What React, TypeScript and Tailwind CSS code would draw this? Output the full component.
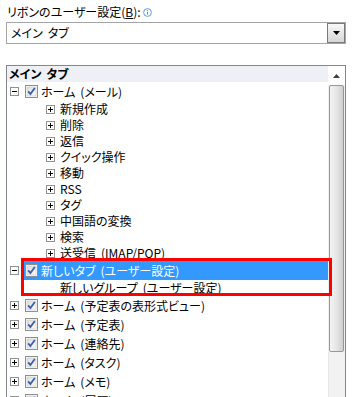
type Row =
  | { kind: "top"; label: string; open: boolean; selected?: boolean }
  | { kind: "sub"; label: string }
  | { kind: "group"; label: string };

const rows: Row[] = [
  { kind: "top", label: "ホーム (メール)", open: true },
  { kind: "sub", label: "新規作成" },
  { kind: "sub", label: "削除" },
  { kind: "sub", label: "返信" },
  { kind: "sub", label: "クイック操作" },
  { kind: "sub", label: "移動" },
  { kind: "sub", label: "RSS" },
  { kind: "sub", label: "タグ" },
  { kind: "sub", label: "中国語の変換" },
  { kind: "sub", label: "検索" },
  { kind: "sub", label: "送受信 (IMAP/POP)" },
  { kind: "top", label: "新しいタブ (ユーザー設定)", open: true, selected: true },
  { kind: "group", label: "新しいグループ (ユーザー設定)" },
  { kind: "top", label: "ホーム (予定表の表形式ビュー)", open: false },
  { kind: "top", label: "ホーム (予定表)", open: false },
  { kind: "top", label: "ホーム (連絡先)", open: false },
  { kind: "top", label: "ホーム (タスク)", open: false },
  { kind: "top", label: "ホーム (メモ)", open: false },
  { kind: "top", label: "ホーム (履歴)", open: false },
];

// spaces in the source font are wider than Noto's, so pad them a bit
function Label({ text }: { text: string }) {
  const parts = text.split(" ");
  return (
    <span className="whitespace-nowrap">
      {parts.map((p, i) => (
        <span key={i}>
          {i > 0 && <span className="inline-block w-[5px]" />}
          {p}
        </span>
      ))}
    </span>
  );
}

function Expander({ open }: { open: boolean }) {
  return (
    <svg width="9" height="9" viewBox="0 0 9 9" className="shrink-0">
      <rect x="0.5" y="0.5" width="8" height="8" fill="#fff" stroke="#919191" />
      <path d="M2 4.5h5" stroke="#000" />
      {!open && <path d="M4.5 2v5" stroke="#000" />}
    </svg>
  );
}

function Check() {
  return (
    <svg width="13" height="13" viewBox="0 0 13 13" className="shrink-0">
      <defs>
        <linearGradient id="cb" x1="0" y1="0" x2="1" y2="1">
          <stop offset="0" stopColor="#dedede" />
          <stop offset="1" stopColor="#fbfbfb" />
        </linearGradient>
      </defs>
      <rect x="0.5" y="0.5" width="12" height="12" fill="#fff" stroke="#8e8f8f" />
      <rect x="2" y="2" width="9" height="9" fill="url(#cb)" stroke="#c4c4c4" strokeWidth="0.6" />
      <path d="M3.2 6.4l2.2 2.6 4.4-6" fill="none" stroke="#3a5ea8" strokeWidth="1.8" />
    </svg>
  );
}

function TreeRow({ row }: { row: Row }) {
  if (row.kind === "sub")
    return (
      <div className="flex h-[16px] items-center pl-[39px]">
        <Expander open={false} />
        <span className="ml-[5px]">
          <Label text={row.label} />
        </span>
      </div>
    );
  if (row.kind === "group")
    return (
      <div className="flex h-[16px] items-center pl-[53px]">
        <Label text={row.label} />
      </div>
    );
  return (
    <div className="flex h-[19px] items-center pl-[3px]">
      <Expander open={row.open} />
      <div
        className={
          "ml-[4px] flex h-full flex-1 items-center pl-[2px] " +
          (row.selected ? "bg-[#3399ff] text-white" : "")
        }
      >
        <Check />
        <span className="ml-[3px]">
          <Label text={row.label} />
        </span>
      </div>
    </div>
  );
}

export default function App() {
  return (
    <div className="relative h-[397px] w-[355px] overflow-hidden bg-white pl-[6px] pt-[4px] text-[12px] leading-[16px] text-black font-['Meiryo_UI','Noto_Sans_CJK_JP',sans-serif] [font-feature-settings:'palt']">
      <div className="flex h-[16px] items-center pl-[1px]">
        <span>
          リボンのユーザー設定(<span className="underline">B</span>):
        </span>
        <svg width="9" height="9" viewBox="0 0 9 9" className="ml-[2px]">
          <circle cx="4.5" cy="4.5" r="3.9" fill="none" stroke="#4a90e2" strokeWidth="0.9" />
          <path d="M4.5 3.8v2.8" stroke="#4a90e2" strokeWidth="1" />
          <circle cx="4.5" cy="2.6" r="0.6" fill="#4a90e2" />
        </svg>
      </div>

      <div className="mt-[2px] flex h-[22px] w-[340px] items-center border border-[#a5a5a5] bg-white">
        <span className="flex-1 pl-[4px]">
          <Label text="メイン タブ" />
        </span>
        <div className="flex h-full w-[18px] items-center justify-center border border-[#7a7a7a] bg-gradient-to-b from-[#f8f8f8] to-[#d6d6d6]">
          <svg width="7" height="4" viewBox="0 0 7 4">
            <path d="M0 0h7L3.5 4z" fill="#000" />
          </svg>
        </div>
      </div>

      <div className="mt-[21px] flex h-[340px] w-[340px] border border-b-0 border-[#828790]">
        <div className="flex-1">
          <div className="flex h-[16px] items-center bg-[#eff0f5] pl-[2px] font-bold">
            <Label text="メイン タブ" />
          </div>
          {rows.map((r, i) => (
            <TreeRow key={i} row={r} />
          ))}
        </div>
        <div className="flex w-[17px] flex-col bg-[#f0f0f0]">
          <div className="flex h-[19px] items-center justify-center bg-white">
            <svg width="7" height="4" viewBox="0 0 7 4">
              <path d="M3.5 0L7 4H0z" fill="#404040" />
            </svg>
          </div>
          <div className="mx-[1px] h-[267px] rounded-[2px] border border-[#979797] bg-gradient-to-r from-[#f4f4f4] via-[#e6e6e6] to-[#cfcfcf]" />
          <div className="flex-1 border-l border-[#e6e6e6] bg-[#f2f2f2]" />
        </div>
      </div>

      <div className="absolute left-[21px] top-[258px] h-[38px] w-[311px] border-[3px] border-[#ff0000]" />
    </div>
  );
}
